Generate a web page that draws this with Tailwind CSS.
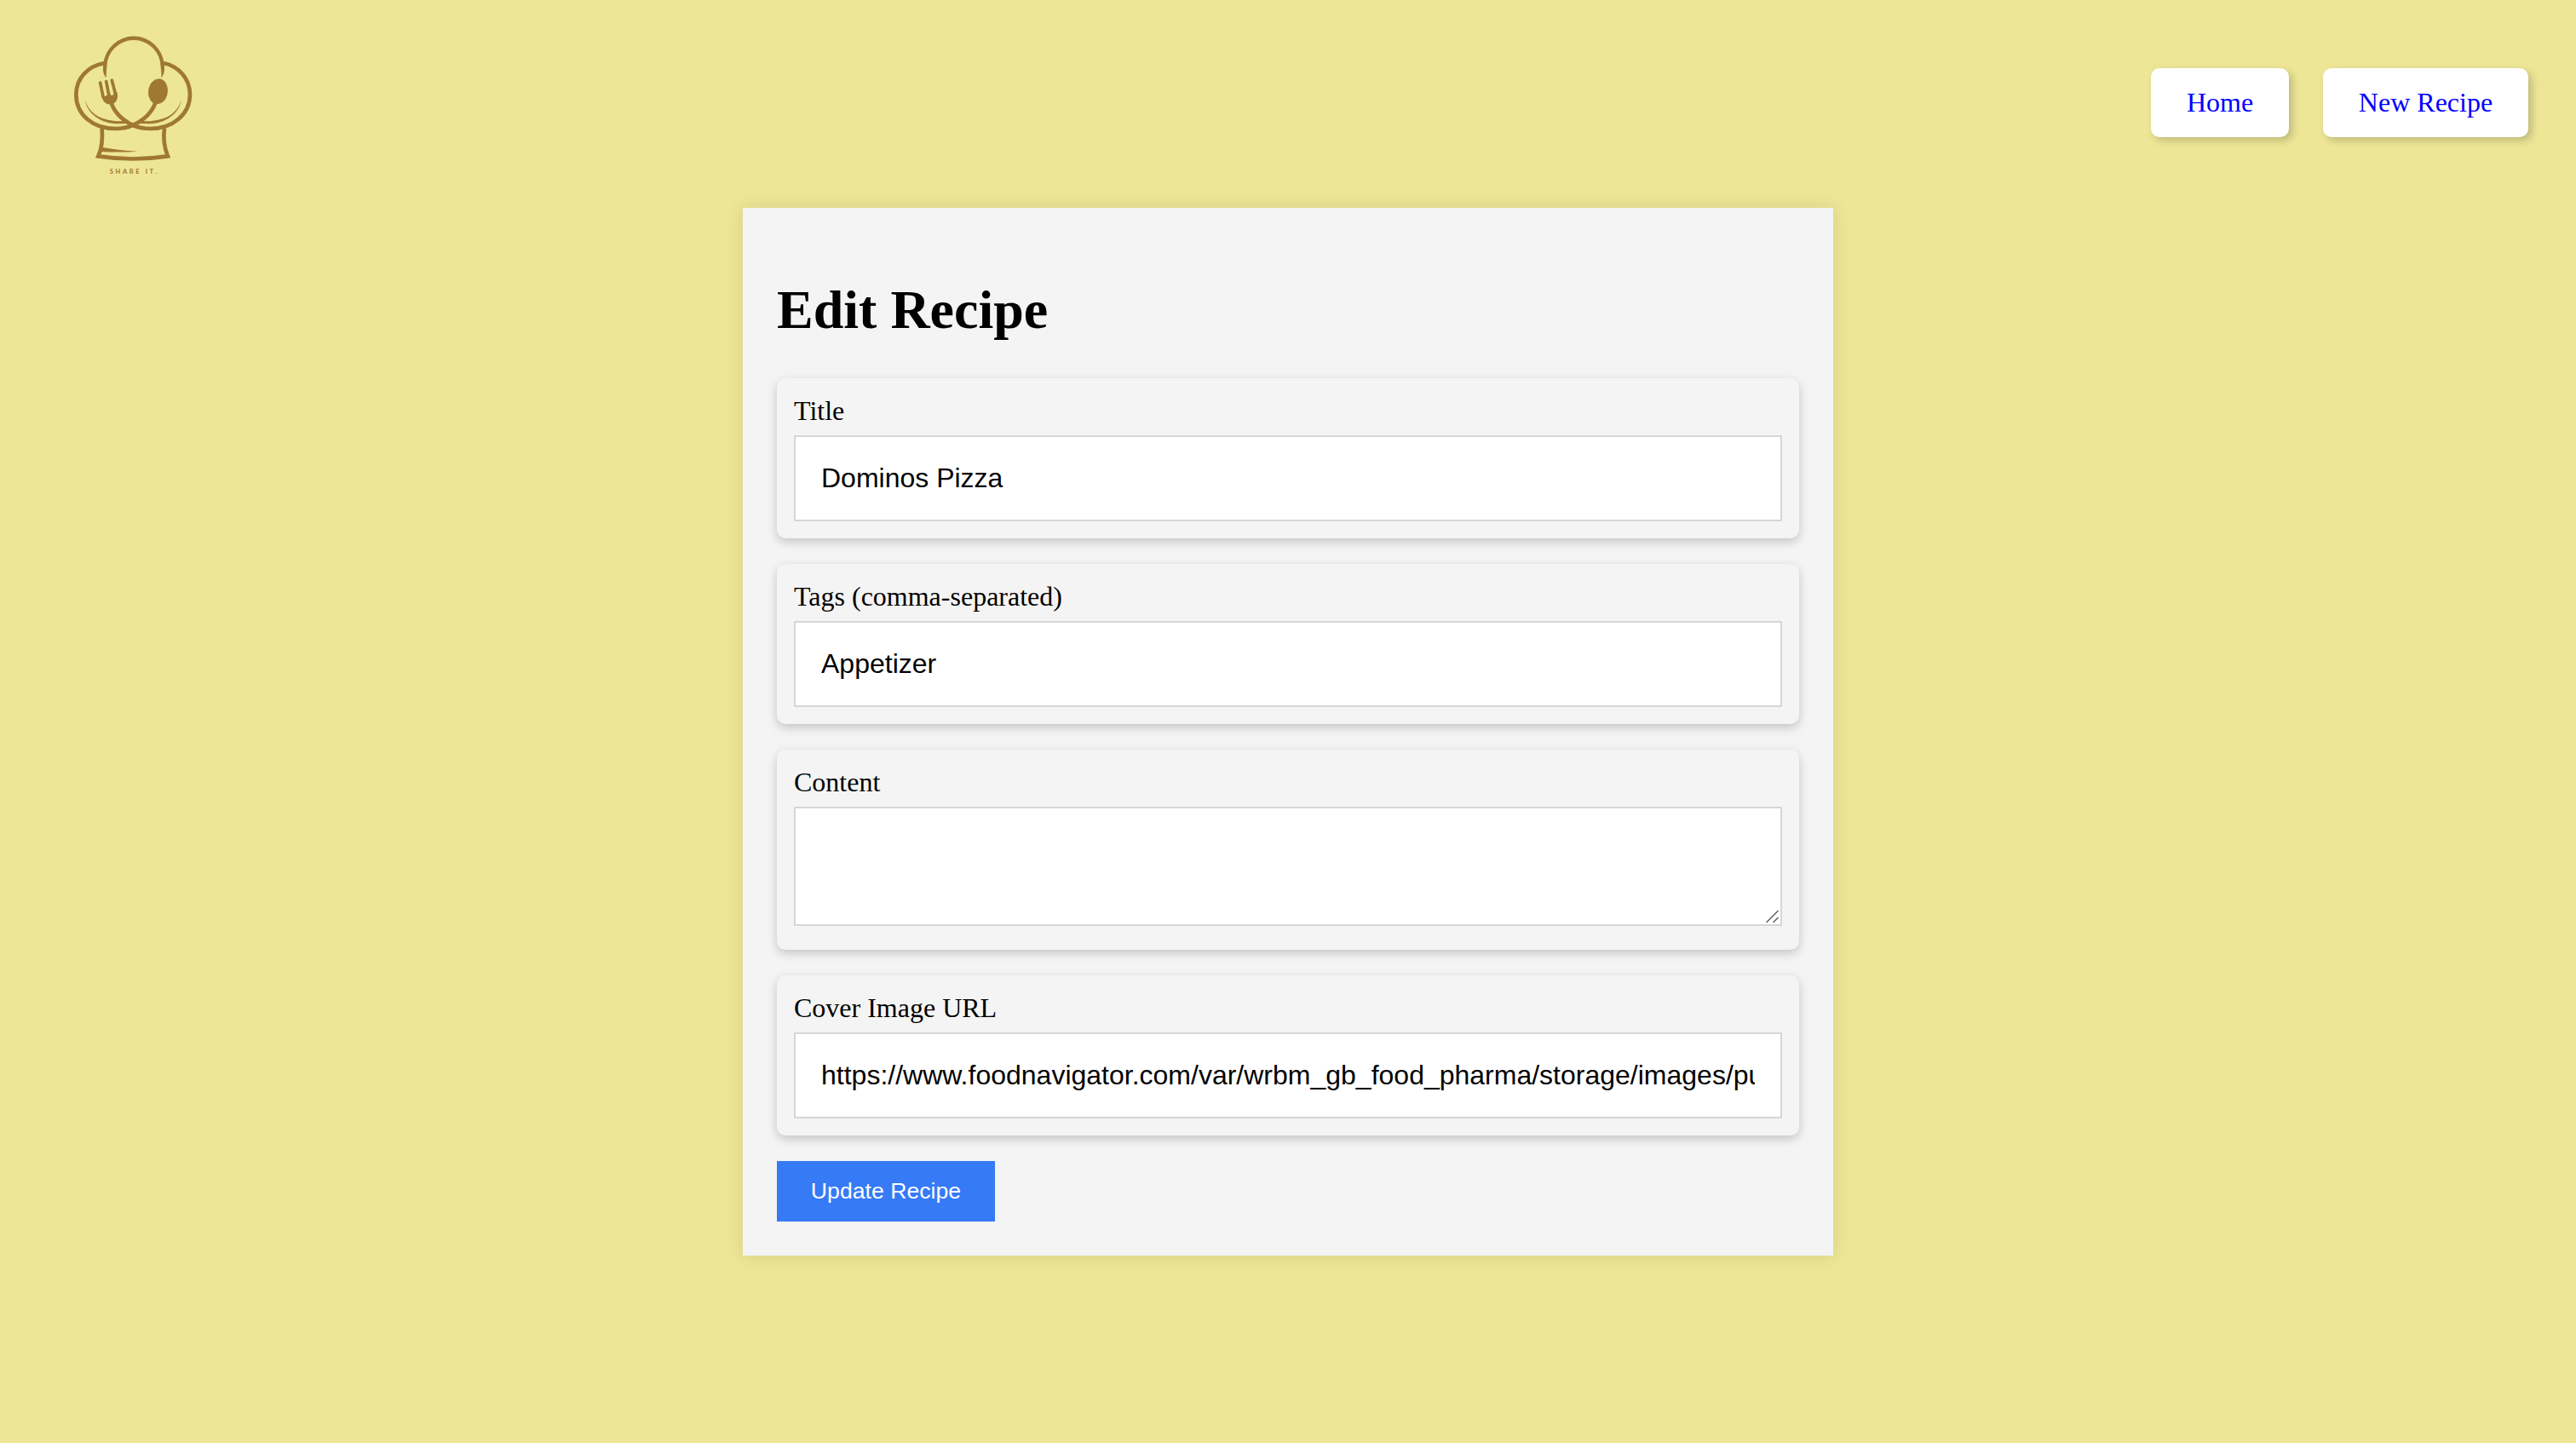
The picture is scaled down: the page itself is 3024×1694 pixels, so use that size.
<!DOCTYPE html>
<html lang="en">
<head>
<meta charset="utf-8">
<title>Edit Recipe</title>
<script src="https://cdn.jsdelivr.net/npm/@tailwindcss/browser@4"></script>
</head>
<body class="min-h-screen bg-[#ede697] font-['Liberation_Serif',serif] text-[32px] text-black">
  <header class="flex h-[244px] items-start justify-between pt-5 pr-14 pl-[60px]">
    <svg class="size-[200px]" viewBox="0 0 600 600" fill="none" stroke="#9f7831" role="img" aria-label="Share it">
      <!-- hat crown -->
      <path d="M194 214 C184 202 181 190 184 165 A107.500 107.500 0 0 1 398 165 C401 190 398 202 388 214 C389 200 388 190 386 176 A94.500 94.500 0 0 0 196 176 C194 190 195 200 194 214 Z" fill="#9f7831" stroke="none"/>
      <!-- side puffs -->
      <path d="M188 162 C128 173 88 217 88 273 C88 345 148 393 226 393 C252 393 270 390 292 379 C332 359 356 334 367 302" stroke-width="14"/>
      <path d="M396 162 C450 174 489 217 489 273 C489 343 428 393 350 393 C324 393 306 390 284 379 C246 359 223 336 212 302" stroke-width="14"/>
      <!-- inner curves -->
      <path d="M119 291 C127 342 177 376 236 376 L270 375 L258 365 C246 367 232 367 219 365 C169 361 132 336 119 291 Z" fill="#9f7831" stroke="none"/>
      <path d="M459 291 C451 342 401 376 342 376 L306 375 L320 365 C332 367 346 367 359 365 C409 361 446 336 459 291 Z" fill="#9f7831" stroke="none"/>
      <!-- fork -->
      <path d="M173 231 L183 280 M194 227 L204 278 M214 223 L227 272" stroke-width="11" stroke-linecap="round"/>
      <path d="M177 272 C182 281 192 282 198 274 L209 272 C213 279 219 277 221 268 L232 264 C239 288 228 306 211 307 C192 309 180 297 177 272 Z" fill="#9f7831" stroke="none"/>
      <!-- spoon -->
      <ellipse cx="376.500" cy="262" rx="34" ry="45" transform="rotate(8 376.500 262)" fill="#9f7831" stroke="none"/>
      <!-- band -->
      <path d="M179 391 C182 428 181 458 166 490 Q288 509 411 490 C398 458 394 428 399 391" stroke-width="14"/>
      <path d="M177 458 C220 466 262 470 305 473 C262 477 220 476 173 474 Z" fill="#9f7831" stroke="none"/>
      <text x="206" y="551" textLength="166" lengthAdjust="spacing" fill="#9f7831" stroke="none" font-family="Lato" font-weight="700" font-size="23">SHARE IT.</text>
    </svg>
    <nav class="flex gap-10 pt-[60px] leading-[81px] text-[#00f]">
      <a class="h-[81px] w-[162px] rounded-[10px] bg-white text-center shadow-[4px_4px_10px_rgba(0,0,0,0.2)]">Home</a>
      <a class="h-[81px] w-[241px] rounded-[10px] bg-white text-center shadow-[4px_4px_10px_rgba(0,0,0,0.2)]">New Recipe</a>
    </nav>
  </header>

  <main class="mx-auto h-[1230px] w-[1280px] bg-[#f4f4f4] px-10 pt-[83px] shadow-[0_0_20px_rgba(0,0,0,0.1)]">
    <h1 class="h-[117px] text-[64px] leading-[74px] font-bold">Edit Recipe</h1>
    <form class="flex flex-col items-start gap-[30px]">
      <label class="flex h-[188px] w-full flex-col rounded-[10px] px-5 pt-5 shadow-[0_4px_12px_rgba(0,0,0,0.2)]">
        <span class="h-[47px] leading-[37px]">Title</span>
        <input class="h-[101px] w-full border-2 border-[#d6d6d6] bg-white px-[30px] font-['Liberation_Sans',sans-serif]" value="Dominos Pizza">
      </label>
      <label class="flex h-[188px] w-full flex-col rounded-[10px] px-5 pt-5 shadow-[0_4px_12px_rgba(0,0,0,0.2)]">
        <span class="h-[47px] leading-[37px]">Tags (comma-separated)</span>
        <input class="h-[101px] w-full border-2 border-[#d6d6d6] bg-white px-[30px] font-['Liberation_Sans',sans-serif]" value="Appetizer">
      </label>
      <label class="flex h-[235px] w-full flex-col rounded-[10px] px-5 pt-5 shadow-[0_4px_12px_rgba(0,0,0,0.2)]">
        <span class="h-[47px] leading-[37px]">Content</span>
        <span class="relative block h-[140px]">
          <textarea class="block h-full w-full resize-none border-2 border-[#d6d6d6] bg-white px-[30px] font-['Liberation_Sans',sans-serif]"></textarea>
          <svg class="absolute right-[3px] bottom-[3px] size-4" viewBox="0 0 16 16" stroke="#5f5f5f" stroke-width="1.500"><path d="M.5 15 L14.500 1 M8.500 15 L14.500 9"/></svg>
        </span>
      </label>
      <label class="flex h-[188px] w-full flex-col rounded-[10px] px-5 pt-5 shadow-[0_4px_12px_rgba(0,0,0,0.2)]">
        <span class="h-[47px] leading-[37px]">Cover Image URL</span>
        <input class="h-[101px] w-full border-2 border-[#d6d6d6] bg-white px-[30px] font-['Liberation_Sans',sans-serif]" value="https://www.foodnavigator.com/var/wrbm_gb_food_pharma/storage/images/publications">
      </label>
      <button type="button" class="h-[71px] w-64 bg-[#367af6] pb-0.5 font-['Liberation_Sans',sans-serif] text-[26.667px] leading-[30px] text-white">Update Recipe</button>
    </form>
  </main>
</body>
</html>
